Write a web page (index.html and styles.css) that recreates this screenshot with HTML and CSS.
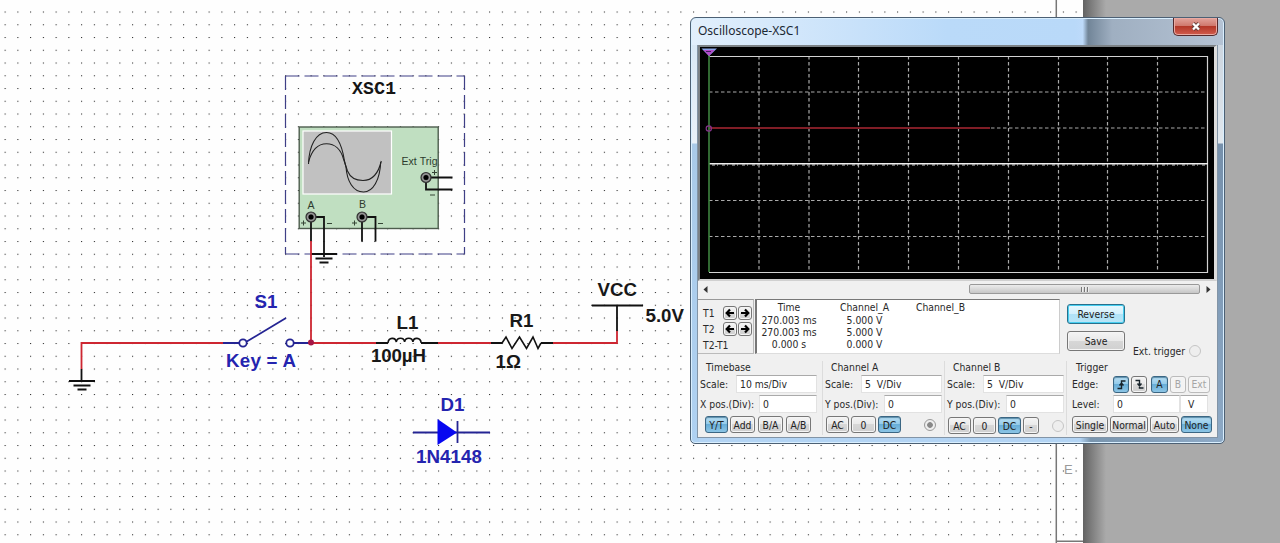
FILE: index.html
```html
<!DOCTYPE html>
<html lang="en">
<head>
<meta charset="utf-8">
<title>Oscilloscope-XSC1</title>
<link rel="stylesheet" href="styles.css">
</head>
<body>
<main class="desktop">
  <svg class="schematic" width="1280" height="543" viewBox="0 0 1280 543">
    <defs>
      <pattern id="dots" x="4.6" y="11.5" width="12.75" height="12.75" patternUnits="userSpaceOnUse">
        <rect width="1.05" height="1.05" fill="#222"/>
      </pattern>
      <linearGradient id="edge"><stop offset="0" stop-color="#626262"/><stop offset=".35" stop-color="#7c7c7c"/><stop offset="1" stop-color="#aaa"/></linearGradient>
      <g id="jack"><circle r="5" fill="#777" stroke="#333" stroke-width="1.2"/><circle r="3.6" fill="none" stroke="#aaa" stroke-width=".7"/><circle r="2.5" fill="#000"/></g>
      <g id="ground" class="ink"><path d="M-13 0H13M-8.500 4.500H8.500M-4.500 8.500H4.500"/></g>
    </defs>
    <rect width="1280" height="543" fill="#fefefe"/>
    <rect y="8" width="1083" height="535" fill="url(#dots)"/>
    <rect x="1083" width="197" height="543" fill="#aaa"/>
    <rect x="1083" width="23" height="543" fill="url(#edge)"/>
    <path d="M1056.300 0V543M1056 541.300H1083" stroke="#777" stroke-width="1.500" fill="none"/>
    <text x="1064" y="473.500" class="zone">E</text>

    <!-- oscilloscope symbol -->
    <path d="M285.500 76H464.500M285.500 254H464.500M285.500 76V254M464.500 76V254" fill="none" stroke="#3f3f86" stroke-width="1.200" stroke-dasharray="14 5"/>
    <text x="352" y="93.500" class="mono" textLength="44">XSC1</text>
    <rect x="299.200" y="127" width="139" height="101.500" fill="#c0dfc1" stroke="#4d5c4d" stroke-width="1.400"/>
    <rect x="303" y="131" width="88.500" height="63" fill="#c1c1c1" stroke="#fff" stroke-width="1.200"/>
    <g class="wave">
      <path d="M308.500 164C309 146 316 132.500 326.500 132.500C337 132.500 342 145 344.500 161L346 167C347 181 353 192 363.500 192C373 192 380 180 380.700 162"/>
      <path d="M308.500 162C312 149 319 143.700 326.500 143.700C335 143.700 341 150 343.500 159L347.500 171C350 177 356 180.500 363 180.500C371 180.500 378 175 381.300 161"/>
    </g>
    <text x="307.500" y="209" class="part">A</text>
    <text x="359" y="208" class="part">B</text>
    <text x="401.500" y="165" class="part" textLength="36">Ext Trig</text>
    <g class="ink"><path d="M311 217V241M311 217H324V257M362 217V241.500M362 217H375.500V241.500M426 177.500H452.500M426 177.500V189.500H452.500"/></g>
    <g stroke="#344434" stroke-width="1" fill="none"><path d="M301 223H306M303.500 220.500V225.500M327 223.500H332M352 223H357M354.500 220.500V225.500M378 223.500H383M432 172.500H437M434.500 170V175M430 195H435"/></g>
    <use href="#jack" x="311" y="217"/><use href="#jack" x="362" y="217"/><use href="#jack" x="426" y="177.500"/>
    <use href="#ground" x="324" y="254"/>

    <!-- wires -->
    <g class="wire"><path d="M81.500 369V343H223M311 241V343H376M438 343H491M553 343H617V331"/></g>
    <g class="ink"><path d="M81.500 369V381M376 343H388M421 343H438M491 343H502M541 343H553M617 306V331M592 305.500H643"/></g>
    <use href="#ground" x="82" y="381"/>
    <path class="coil" d="M388 343C388.500 337 395.500 337 396.300 342C397 337 404 337 404.600 342C405.300 337 412.200 337 412.900 342C413.500 337 420.500 337 421.200 343"/>
    <path class="coil" d="M502 343L506 337L512 348.500L519.500 337L526.500 348.500L533 337L538 348.500L541 343"/>

    <!-- switch and diode -->
    <g class="navy"><path d="M223 343H239M246 342L286 318M294 343H311"/><circle cx="243" cy="343" r="3.700"/><circle cx="290" cy="343" r="3.700"/><path d="M413 432.500H490M457.500 421V443"/></g>
    <circle cx="311" cy="342.500" r="3" fill="#a51645"/>
    <path d="M437.500 419V445L457 432.500Z" fill="#0707f0"/>
    <g class="label blue"><text x="254.500" y="308">S1</text><text x="226" y="367" textLength="70">Key = A</text><text x="440.500" y="410.500">D1</text><text x="416" y="462.500" textLength="66">1N4148</text></g>
    <g class="label"><text x="396.500" y="328.500">L1</text><text x="371" y="362" textLength="55">100µH</text><text x="509.500" y="326.500">R1</text><text x="495.500" y="368">1Ω</text><text x="597.500" y="295.500">VCC</text><text x="645.500" y="322">5.0V</text></g>
  </svg>

  <section class="window">
    <header class="titlebar">
      <h1 class="title">Oscilloscope-XSC1</h1>
      <button class="close" aria-label="Close"><svg width="12" height="11" viewBox="0 0 12 11"><path d="M3 2.500L9 8.500M9 2.500L3 8.500" stroke="#68413d" stroke-width="4"/><path d="M3 2.500L9 8.500M9 2.500L3 8.500" stroke="#fff" stroke-width="2.300"/></svg></button>
    </header>
    <div class="client">
      <div class="display">
        <svg width="514" height="231" viewBox="701 48 514 231">
          <g stroke="#a9a9a9" stroke-width="1.200" stroke-dasharray="3.500 2.500" fill="none">
            <path d="M759 56V272M809 56V272M858.500 56V272M908.500 56V272M958.500 56V272M1008.500 56V272M1058.500 56V272M1107.500 56V272M1157.500 56V272"/>
            <path d="M709 92H1208M709 128H1208M709 200.500H1208M709 236.500H1208"/>
          </g>
          <path d="M709 56.500H1207.500V272.500H709" fill="none" stroke="#d2d2d2" stroke-width="1.200"/>
          <path d="M709 163.700H1208" stroke="#eee" stroke-width="1.500"/>
          <path d="M712 165H1208" stroke="#ccc" stroke-width="1" stroke-dasharray="3 2 1 4"/>
          <path d="M709 128H990" stroke="#801d26" stroke-width="1.800"/>
          <path d="M709 54V272" stroke="#3e833f" stroke-width="1.600"/>
          <path d="M701.500 48.500H717L709 56Z" fill="#8ba5e8"/><path d="M703.500 50H714.500L709 56Z" fill="#b34acb"/><path d="M706 51.500H711" stroke="#402060"/>
          <circle cx="708.800" cy="128.500" r="2.600" fill="none" stroke="#87338d" stroke-width="1.200"/>
        </svg>
      </div>
      <div class="scrollbar">
        <svg class="arrow" width="5" height="7" viewBox="0 0 5 7"><path d="M4.500 0V7L.5 3.500Z"/></svg>
        <div class="thumb"><i></i><i></i><i></i></div>
        <svg class="arrow" width="5" height="7" viewBox="0 0 5 7"><path d="M.5 0V7L4.500 3.500Z"/></svg>
      </div>
      <div class="readouts">
        <div class="cursors">
          <div class="cursor"><span>T1</span><button class="btn step" aria-label="T1 left"><svg width="10" height="10" viewBox="0 0 10 10"><path d="M9 5H3M5 1.500L1.700 5L5 8.500"/></svg></button><button class="btn step" aria-label="T1 right"><svg width="10" height="10" viewBox="0 0 10 10"><path d="M1 5H7M5 1.500L8.300 5L5 8.500"/></svg></button></div>
          <div class="cursor"><span>T2</span><button class="btn step" aria-label="T2 left"><svg width="10" height="10" viewBox="0 0 10 10"><path d="M9 5H3M5 1.500L1.700 5L5 8.500"/></svg></button><button class="btn step" aria-label="T2 right"><svg width="10" height="10" viewBox="0 0 10 10"><path d="M1 5H7M5 1.500L8.300 5L5 8.500"/></svg></button></div>
          <span class="delta">T2-T1</span>
        </div>
        <div class="values">
          <span>Time</span><span>Channel_A</span><span>Channel_B</span>
          <span>270.003 ms</span><span>5.000 V</span><span></span>
          <span>270.003 ms</span><span>5.000 V</span><span></span>
          <span>0.000 s</span><span>0.000 V</span><span></span>
        </div>
        <div class="actions"><button class="btn wide focus">Reverse</button><button class="btn wide">Save</button></div>
        <label class="external">Ext. trigger <i class="radio"></i></label>
      </div>
      <div class="groups">
        <section class="group timebase">
          <h2>Timebase</h2>
          <div class="field"><span>Scale:</span><b class="input long">10 ms/Div</b></div>
          <div class="field"><span>X pos.(Div):</span><b class="input short">0</b></div>
          <div class="buttons"><button class="btn w22 on">Y/T</button><button class="btn w25">Add</button><button class="btn w25 apart">B/A</button><button class="btn w25 apart">A/B</button></div>
        </section>
        <section class="group channel">
          <h2>Channel A</h2>
          <div class="field"><span>Scale:</span><b class="input long">5&nbsp; V/Div</b></div>
          <div class="field"><span>Y pos.(Div):</span><b class="input short">0</b></div>
          <div class="buttons"><button class="btn w22">AC</button><button class="btn w25">0</button><button class="btn w22 on">DC</button><i class="radio checked"></i></div>
        </section>
        <section class="group channel second">
          <h2>Channel B</h2>
          <div class="field"><span>Scale:</span><b class="input long">5&nbsp; V/Div</b></div>
          <div class="field"><span>Y pos.(Div):</span><b class="input short">0</b></div>
          <div class="buttons"><button class="btn w22">AC</button><button class="btn w22">0</button><button class="btn w22 on">DC</button><button class="btn w16">-</button><i class="radio"></i></div>
        </section>
        <section class="group trigger">
          <h2>Trigger</h2>
          <div class="field"><span class="name">Edge:</span>
            <button class="btn edge on" aria-label="Rising edge"><svg width="11" height="11" viewBox="0 0 11 11"><path d="M1.500 9.500H5.500V2H9.500M3.500 6.500L5.500 4L7.500 6.500"/></svg></button>
            <button class="btn edge" aria-label="Falling edge"><svg width="11" height="11" viewBox="0 0 11 11"><path d="M1.500 1.500H5.500V9H9.500M3.500 4.500L5.500 7L7.500 4.500"/></svg></button>
            <button class="btn edge source on">A</button><button class="btn edge off">B</button><button class="btn edge ext off">Ext</button></div>
          <div class="field"><span class="name">Level:</span><b class="input level">0</b><b class="input unit">V</b></div>
          <div class="buttons"><button class="btn w36">Single</button><button class="btn w38">Normal</button><button class="btn w29">Auto</button><button class="btn w30 on">None</button></div>
        </section>
      </div>
    </div>
  </section>
</main>
</body>
</html>
```
FILE: styles.css
```css
* { box-sizing: border-box; }
body { margin: 0; overflow: hidden; font: 10.3px/12px "DejaVu Sans Condensed", "Noto Sans", sans-serif; color: #292929; }
.desktop { position: relative; width: 1280px; height: 543px; }
.schematic { display: block; }
.ink, .coil, .wire, .wave, .navy { fill: none; stroke: #111; stroke-width: 1.8; }
.wire { stroke: #cd2631; }
.wave { stroke: #222; stroke-width: 1.1; }
.navy { stroke: #242493; }
.coil { stroke-width: 1.6; }
.label { font: bold 18.7px "Liberation Sans", sans-serif; fill: #181818; }
.blue { fill: #2424af; }
.mono { font: bold 18px "Liberation Mono", monospace; fill: #151515; }
.part { font: 10.5px "Liberation Sans", sans-serif; fill: #2d3b2d; }
.zone { font: 13px "Liberation Sans", sans-serif; fill: #999; }

.window {
  position: absolute; left: 690px; top: 17px; width: 535px; height: 427px;
  padding: 0 7px 6px 6px; border: 1px solid #4c6074; border-radius: 6px 6px 5px 5px;
  background:
    linear-gradient(90deg, #e2effc, #badaf9 48%, #b9d9f9 72%, #bddafa 73.5%, #718598 74.5%, #9fafc1 79%, #b5c3d4) 0 0 / 100% 27px no-repeat,
    linear-gradient(#d5e6f5, #e9f1f8 125px, #a9cae8 126px, #afd1f1) 0 0 / 8px 100% no-repeat,
    linear-gradient(#c7d1dc, #e0e7ed 125px, #7690ab 126px, #8da9c5) 100% 0 / 8px 100% no-repeat,
    linear-gradient(90deg, #b3d4f4 73%, #7995ae 75%, #8fabc8);
  box-shadow: inset 0 0 0 1px #d9efff;
}
.titlebar { display: flex; justify-content: space-between; height: 27px; }
.title { margin: 5px 0 0 1px; font: 12px/16px "Noto Sans", sans-serif; color: #1b2733; }
.close { display: grid; place-items: center; width: 45px; height: 18px; margin-right: -1px; padding: 0; border: 1px solid #54292c; border-top: 0; border-radius: 0 0 5px 5px; background: linear-gradient(#e2a49c, #d0796e 45%, #b43829 50%, #d15c4d); box-shadow: inset 0 0 0 1px #e9aaa2; }
.client { width: 521px; height: 393px; background: #f0f0f0; border: 1px solid #8294a6; border-top: 0; }
.display { height: 236px; background: #000; border: 2px solid #7c8286; border-bottom-color: #d0d0d0; border-right: 3px solid #ddd; padding: 1px; }
.display svg { display: block; }
.scrollbar { display: flex; align-items: center; height: 17px; padding: 0 6px 1px 5px; }
.thumb { display: flex; align-items: center; justify-content: center; gap: 1px; width: 231px; height: 10px; margin: 0 6px 0 auto; border: 1px solid #999; border-radius: 2px; background: linear-gradient(#ececec, #c6c6c6); }
.thumb i { width: 2px; height: 5px; background: #777; border-right: 1px solid #eee; }
.arrow { fill: #333; }
.readouts { display: flex; height: 55px; margin-top: 1px; }
.cursors { width: 56px; padding: 5px 0 0 5px; border: 1px solid #bbb; border-left: 0; border-top-color: #999; }
.cursor { display: flex; align-items: center; height: 16px; gap: 1px; }
.cursor span { width: 19px; }
.delta { display: block; margin-top: 2px; }
.values { display: grid; grid-template-columns: 64px 86px 66px; grid-template-rows: 12.5px 12.3px 12.3px 12.3px; width: 305px; padding: 1px 0 0; margin-left: 1px; background: #fff; border: 1px solid #777; border-left-width: 2px; border-right: 1px solid #ccc; border-bottom: 1px solid #ddd; text-align: center; white-space: nowrap; }
.values span:nth-child(3n) { text-align: right; margin-right: 8px; direction: rtl; }
.values span:nth-child(3n+2) { padding-left: 1px; }
.actions { display: flex; flex-direction: column; gap: 7px; margin: 5px 0 0 7px; }
.external { display: flex; align-items: center; gap: 4px; height: 14px; margin: 45px 0 0 8px; white-space: nowrap; }

.btn { flex: none; display: flex; align-items: center; justify-content: center; height: 17px; padding: 0; border: 1px solid #777; border-radius: 3px; background: linear-gradient(#f4f4f4, #e9e9e9 49%, #d7d7d7 50%, #d0d0d0); color: #222; font: inherit; box-shadow: inset 0 0 0 1px #f5f5f5; white-space: nowrap; }
.btn.on { border-color: #3b6683; background: linear-gradient(#b9def2, #91caea 49%, #68aed8 50%, #8cc5e5); box-shadow: inset 0 1px 1px #5a8daa; }
.btn.off { color: #a5a5a5; border-color: #bbb; background: #f3f3f3; }
.step { width: 14px; height: 14px; }
.step path { fill: none; stroke: #000; stroke-width: 2.2; }
.wide { width: 58px; height: 20px; }
.focus { border-color: #28708c; background: linear-gradient(#e8f8fe, #d3f0fc 49%, #b0e2f7 50%, #b9e5f6); box-shadow: inset 0 0 0 1px #47cef0; }
.w16 { width: 16px; } .w22 { width: 23px; } .w25 { width: 25px; }
.w29 { width: 29px; } .w30 { width: 31px; } .w36 { width: 36px; } .w38 { width: 38px; }

.groups { display: grid; grid-template-columns: 125px 122px 122px 149px; height: 81px; padding-top: 7px; }
.group { padding-left: 2px; border-right: 1px solid #dcdcdc; min-width: 0; }
.group h2 { width: max-content; height: 13px; margin: 0 0 0 6px; font: inherit; line-height: 13px; }
.trigger { padding-left: 5px; border: 0; }
.trigger h2 { margin-left: 4px; }
.field { display: flex; align-items: center; height: 20px; padding-right: 5px; white-space: nowrap; }
.channel .field { padding-right: 2px; }
.input { height: 18px; padding: 0 3px; margin-left: auto; border: 1px solid #e2e2e2; border-top-color: #aaa; background: #fff; font-weight: normal; line-height: 16px; }
.long { width: 81px; } .short { width: 58px; }
.name { width: 41px; }
.buttons { display: flex; align-items: center; gap: 2px; height: 17px; margin-top: 2px; padding-left: 5px; }
.channel .buttons { padding-left: 1px; }
.apart { margin-left: 1px; }
.second .buttons { margin-top: 3px; }
.buttons .radio { margin: 0 8px 0 auto; }
.second .buttons .radio { margin-right: 2px; }
.radio { display: block; width: 12px; height: 12px; border: 1px solid #c5c5c5; border-radius: 50%; background: #eee; }
.checked { background: radial-gradient(circle, #888 0 35%, #eee 45%); border-color: #999; }
.trigger .field { padding: 0; }
.trigger .buttons { padding-left: 0; margin-top: 2px; }
.edge { width: 16px; margin-right: 2px; }
.source { margin-left: 2px; width: 17px; }
.ext { width: 22px; margin-right: 0; }
.edge path { fill: none; stroke: #17232b; stroke-width: 1.4; }
.level { width: 67px; margin-left: 0; }
.unit { width: 28px; margin-left: 0; padding-left: 7px; }
```
